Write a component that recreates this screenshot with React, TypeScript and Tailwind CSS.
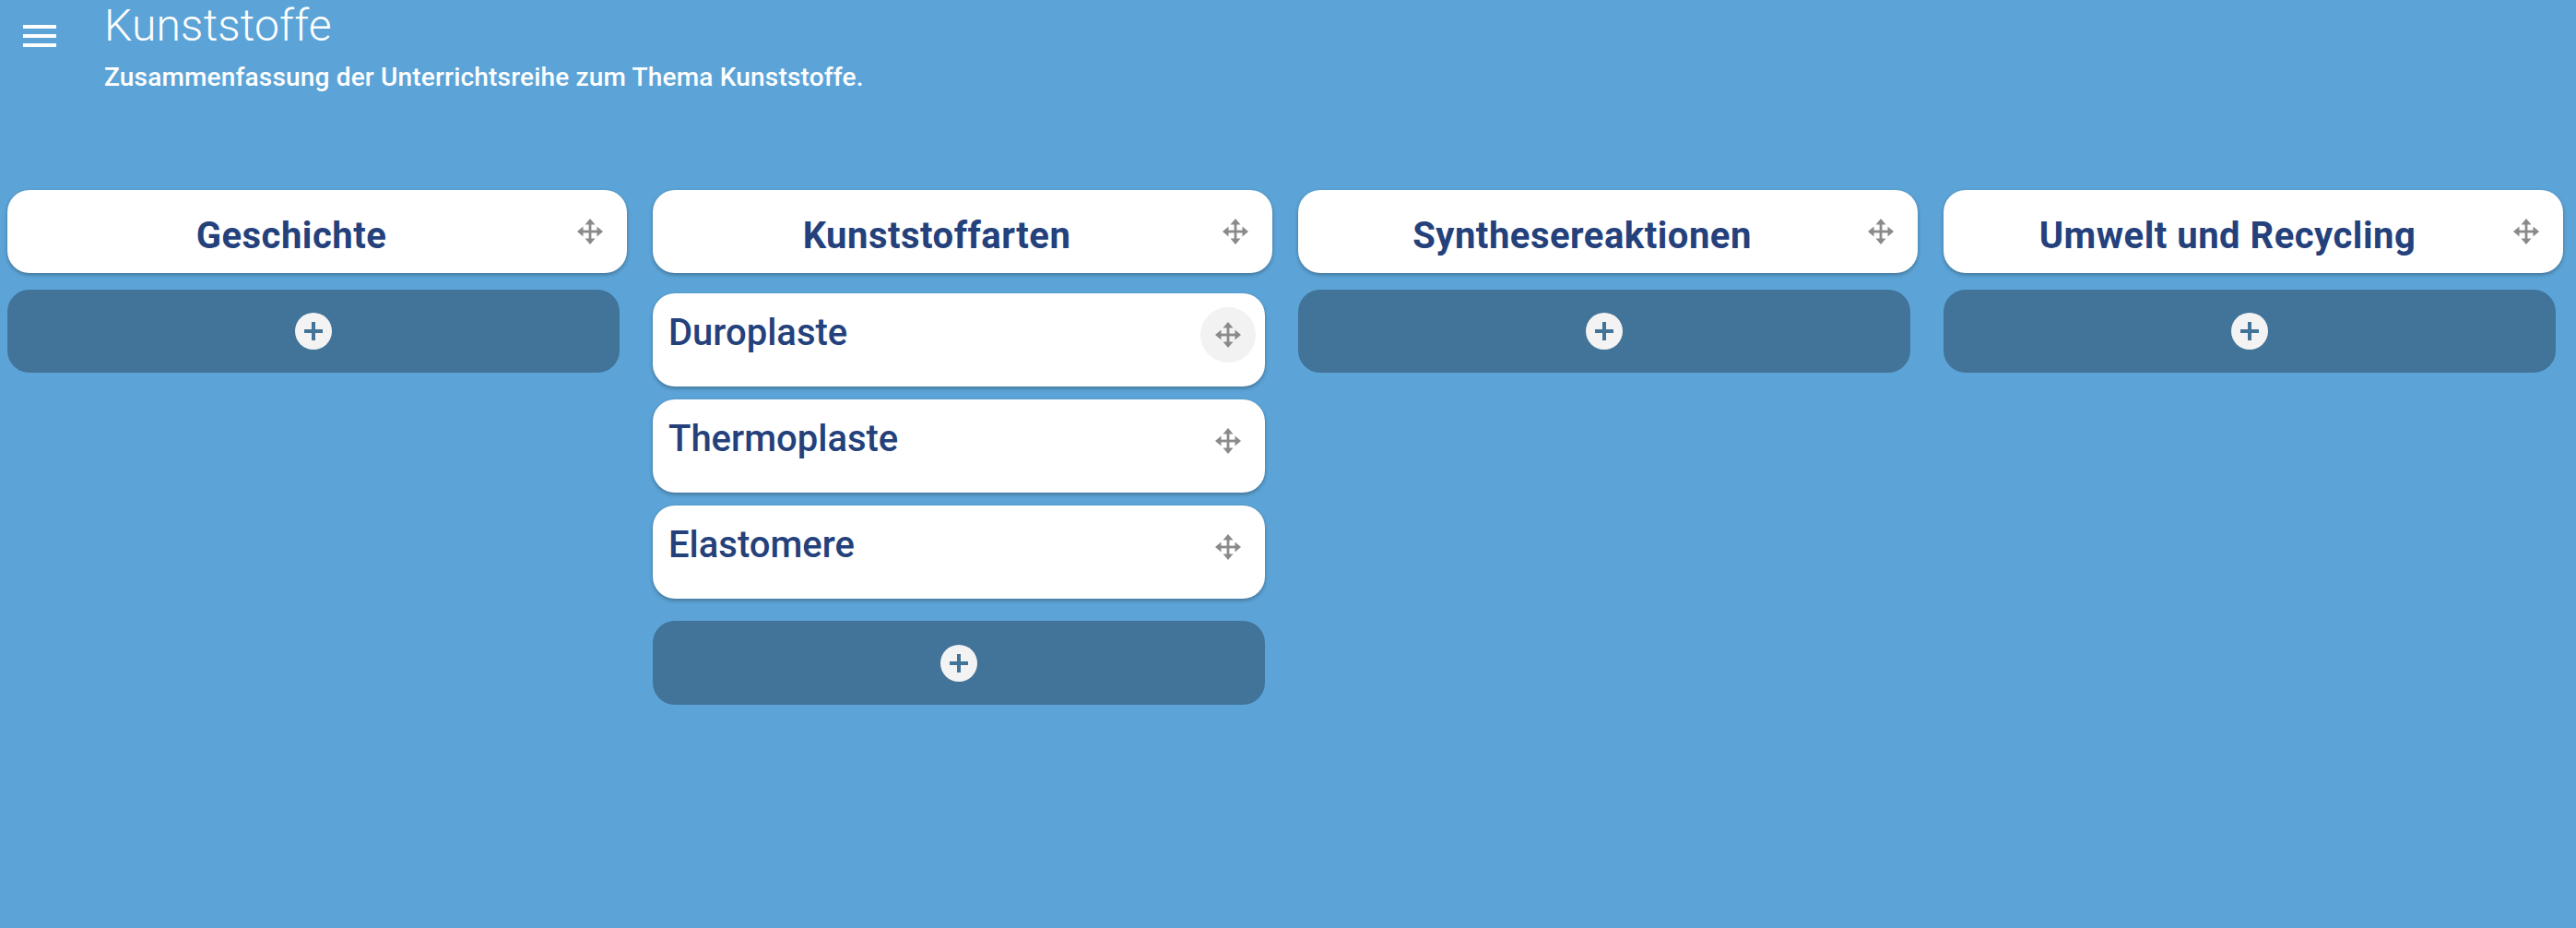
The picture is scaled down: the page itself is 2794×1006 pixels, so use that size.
import React from "react";

const MoveIcon = () => (
  <svg width="28" height="28" viewBox="0 0 28 28" fill="#8a8a8a">
    <polygon points="14,0 8.5,6.5 19.5,6.5" />
    <polygon points="14,28 8.5,21.5 19.5,21.5" />
    <polygon points="0,14 6.5,8.5 6.5,19.5" />
    <polygon points="28,14 21.5,8.5 21.5,19.5" />
    <rect x="12.6" y="5" width="2.8" height="18" />
    <rect x="5" y="12.6" width="18" height="2.8" />
  </svg>
);

const MenuIcon = () => (
  <svg width="48" height="48" viewBox="0 0 48 48" fill="#ffffff">
    <rect x="6" y="12" width="36" height="4" />
    <rect x="6" y="22" width="36" height="4" />
    <rect x="6" y="32" width="36" height="4" />
  </svg>
);

const AddCircle = () => (
  <svg width="40" height="40" viewBox="0 0 40 40">
    <circle cx="20" cy="20" r="20" fill="#f3f3f3" />
    <rect x="10" y="18" width="20" height="4" fill="#427398" />
    <rect x="18" y="10" width="4" height="20" fill="#427398" />
  </svg>
);

type Col = { title: string; items: string[] };

const columns: Col[] = [
  { title: "Geschichte", items: [] },
  { title: "Kunststoffarten", items: ["Duroplaste", "Thermoplaste", "Elastomere"] },
  { title: "Synthesereaktionen", items: [] },
  { title: "Umwelt und Recycling", items: [] },
];

const font = { fontFamily: "Roboto, 'Noto Sans', sans-serif" };

export default function App() {
  return (
    <div
      className="min-h-screen w-full overflow-hidden bg-[#5ca4d7]"
      style={font}
    >
      <div className="flex">
        <div className="ml-[19px] mt-[15px] shrink-0">
          <MenuIcon />
        </div>
        <div className="ml-[46px] flex flex-col text-white">
          <div className="text-[48px] leading-[56px] font-light tracking-[0.2px]">Kunststoffe</div>
          <div className="mt-[12px] text-[28px] leading-[32px] font-medium tracking-[0.18px]">
            Zusammenfassung der Unterrichtsreihe zum Thema Kunststoffe.
          </div>
        </div>
      </div>

      <div className="mt-[106px] flex">
        {columns.map((col, ci) => (
          <div key={ci} className="w-[700px] shrink-0 pl-[8px] flex flex-col">
            <div className="w-[672px] h-[90px] rounded-[24px] bg-white shadow-[0_2px_4px_rgba(0,0,0,0.3)] flex items-center">
              <div className="flex-1 text-center pt-[9px] text-[40px] font-bold tracking-[0.5px] text-[#24417c] leading-normal">
                {col.title}
              </div>
              <div className="w-[32px] mr-[24px] flex justify-center">
                <MoveIcon />
              </div>
            </div>

            {col.items.length > 0 ? (
              <div className="mt-[22px] flex flex-col gap-[14px]">
                {col.items.map((it, ii) => (
                  <div
                    key={ii}
                    className="w-[664px] h-[101px] rounded-[24px] bg-white shadow-[0_2px_4px_rgba(0,0,0,0.3)] flex items-start"
                  >
                    <div className="flex-1 pl-[17px] pt-[13px] text-[40px] font-medium text-[#24417c] leading-normal">
                      {it}
                    </div>
                    <div
                      className={
                        ii === 0
                          ? "mt-[15px] mr-[10px] w-[60px] h-[60px] rounded-full bg-[#f2f2f2] flex items-center justify-center"
                          : "mt-[15px] mr-[10px] w-[60px] h-[60px] rounded-full flex items-center justify-center"
                      }
                    >
                      <MoveIcon />
                    </div>
                  </div>
                ))}
              </div>
            ) : null}

            <div
              className={
                col.items.length > 0
                  ? "mt-[24px] w-[664px] h-[91px] rounded-[24px] bg-[#427398] flex items-center justify-center"
                  : "mt-[18px] w-[664px] h-[90px] rounded-[24px] bg-[#427398] flex items-center justify-center"
              }
            >
              <AddCircle />
            </div>
          </div>
        ))}
      </div>
    </div>
  );
}
